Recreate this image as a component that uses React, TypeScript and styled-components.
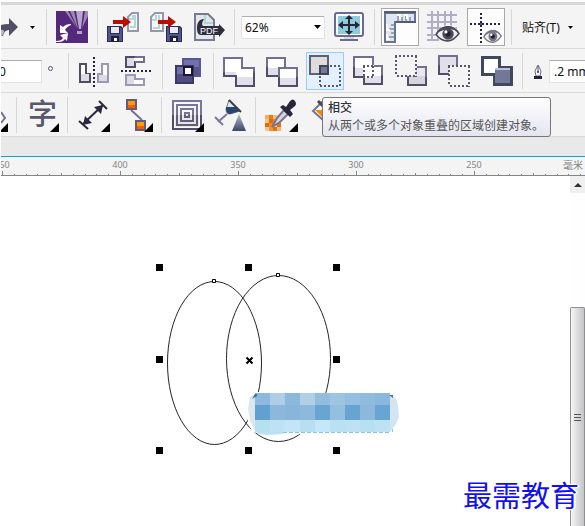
import React from "react";
import styled, { createGlobalStyle, css } from "styled-components";

const GlobalStyle = createGlobalStyle`
  * { box-sizing: border-box; }
  body {
    margin: 0;
    background: #fff;
    font-family: "Noto Sans", "Noto Sans CJK SC", sans-serif;
    font-size: 12px;
    color: #111;
  }
  button, input, select { font: inherit; color: inherit; }
  svg { display: block; flex: none; }
`;

const Page = styled.div`
  display: flex;
  flex-direction: column;
  min-height: 100vh;
  padding-left: 1px;
  overflow: hidden;
  position: relative;
`;

const TopEdge = styled.div`
  height: 5px;
  border-top: 2px solid #fff;
  background: #d7d7d7;
`;

const Toolbar = styled.div`
  display: flex;
  align-items: center;
  gap: 5px;
  height: 44px;
  padding: 3px 0 2px;
  background: #f4f4f4;
  border-bottom: 1px solid #d9d9d9;
  white-space: nowrap;
`;

const Separator = styled.span`
  flex: none;
  width: 1px;
  height: 36px;
  margin: 0 1px;
  background: #d6d6d6;
`;

const ToolButton = styled.button<{ $state?: "pressed" | "hover"; $width?: number }>`
  flex: none;
  width: ${(p) => p.$width ?? 38}px;
  height: 38px;
  padding: 0;
  border: 0;
  background: transparent;
  overflow: hidden;
  ${(p) => p.$state === "pressed" && css`
    background: #fdfdfd;
    box-shadow: inset 0 0 0 1px #a9a9a9;
  `}
  ${(p) => p.$state === "hover" && css`
    background: #e2f1fd;
    box-shadow: inset 0 0 0 1px #99ccf8;
  `}
`;

const SnapButton = styled.button`
  display: flex;
  flex: none;
  align-items: center;
  gap: 8px;
  height: 38px;
  padding: 0 4px;
  border: 0;
  background: transparent;
`;

const ZoomBox = styled.label`
  display: grid;
  flex: none;
  align-items: center;
  width: 84px;
  height: 23px;
  & > * { grid-area: 1 / 1; }
  & > svg { justify-self: end; margin-right: 4px; pointer-events: none; }
`;

const ZoomSelect = styled.select`
  appearance: none;
  width: 100%;
  height: 100%;
  padding: 0 3px;
  border: 1px solid #dfe2e8;
  border-top-color: #abadb3;
  border-radius: 2px;
  background: #fff;
`;

const Field = styled.input<{ $width: number; $cut?: boolean }>`
  flex: none;
  width: ${(p) => p.$width}px;
  height: 23px;
  padding: 0 4px;
  border: 1px solid #dfe2e8;
  border-top-color: #abadb3;
  background: #fff;
  ${(p) => p.$cut && css`
    padding: 0;
    border-left: 0;
    text-indent: -2px;
  `}
`;

const Unit = styled.span`
  flex: none;
  width: 15px;
  height: 38px;
`;

const TipAnchor = styled.div`
  position: relative;
  flex: none;
  height: 38px;
`;

const Tooltip = styled.div`
  position: absolute;
  z-index: 2;
  top: 45px;
  left: 16px;
  height: 40px;
  padding: 1px 5px;
  border: 1px solid #767676;
  border-radius: 3px;
  background: linear-gradient(#fff, #e4e5f0);
  line-height: 18px;
  width: 229px;
  color: #555;
`;

const TipTitle = styled.div`
  color: #333;
  font-weight: 500;
`;

const Band = styled.div`
  height: 20px;
  background: #e9e9e9;
  border-bottom: 1px solid #10a0ee;
`;

const Ruler = styled.div`
  position: relative;
  height: 19px;
  overflow: hidden;
  background: #f4f4f4;
  border-bottom: 1px solid #858585;
  color: #858585;
  font-size: 9px;
  line-height: 12px;
`;

const RulerCells = styled.div`
  display: flex;
  margin-left: -58px;
`;

const RulerCell = styled.div`
  flex: none;
  width: 118px;
  padding-top: 2px;
  text-align: center;
`;

const RulerUnit = styled.span`
  position: absolute;
  top: 2px;
  right: 2px;
  font-size: 10px;
  background: #f4f4f4;
`;

const Workspace = styled.main`
  display: flex;
  flex: 1;
`;

const Canvas = styled.div`
  flex: 1;
  min-width: 0;
  overflow: hidden;
`;

const Scrollbar = styled.div`
  display: flex;
  flex: none;
  flex-direction: column;
  justify-content: space-between;
  width: 15px;
  background: #fefefe;
`;

const ScrollArrow = styled.button`
  height: 17px;
  padding: 0;
  border: 0;
  background: #f0f0f0;
`;

const Thumb = styled.div`
  display: flex;
  align-items: center;
  justify-content: center;
  height: 219px;
  border: 1px solid #8e8e8e;
  border-bottom: 0;
  border-radius: 2px 2px 0 0;
  background: linear-gradient(90deg, #f6f6f6, #dedede 45%, #c4c5c9);
`;

const Watermark = styled.div`
  position: absolute;
  right: 6px;
  bottom: 14px;
  color: #1010f0;
  font-size: 29px;
  font-weight: 400;
  line-height: 36px;
  font-family: "Kaiti SC", KaiTi, "Noto Sans CJK SC", sans-serif;
  text-shadow: 0 0 2px #fff, 1px 1px 1px #fff, -1px -1px 1px #fff, 2px 0 1px #fff;
`;

const Icon = ({ w = 38, children }: { w?: number; children: React.ReactNode }) => (
  <svg width={w} height={38} viewBox={`0 0 ${w} 38`} aria-hidden="true">{children}</svg>
);

const Caret = () => (
  <svg width="7" height="4" viewBox="0 0 7 4" aria-hidden="true"><path d="M0 0h7L3.500 4z" fill="#000" /></svg>
);

const Tool = ({ label, state, children }: { label: string; state?: "pressed" | "hover"; children: React.ReactNode }) => (
  <ToolButton type="button" aria-label={label} $state={state}><Icon>{children}</Icon></ToolButton>
);

const Flyout = () => <path d="M36 27v9h-9z" fill="#000" />;

const DARK = "#514d66";
const MID = "#73708f";

const Floppy = ({ x }: { x: number }) => (
  <g transform={`translate(${x} 18)`}>
    <path d="M0 0h14l2 2v14H0z" fill="#2b2d56" />
    <path d="M1 1h2v7h10V1l2 2v12H1z" fill="#50558c" />
    <path d="M4 1h8v6H4z" fill="#e8eaf4" />
    <path d="M4 10h8v6H4z" fill="#20203e" />
    <path d="M7 12h3v3H7z" fill="#fff" />
  </g>
);

const RedArrow = ({ x }: { x: number }) => (
  <path d={`M${x} 12h10V8l8 6-8 6v-4H${x}z`} fill="#bb0d00" />
);

const Eye = ({ x, y, w, h, c }: { x: number; y: number; w: number; h: number; c: string }) => (
  <svg x={x} y={y} width={w} height={h} viewBox="0 0 24 17" preserveAspectRatio="none">
    <path d="M0 9C4 3 8 0 13 0s9 4 11 8c-3 5-7 9-12 9S3 14 0 9z" fill="#f4f4f4" />
    <path d="M1 9C4 4 8 2 13 2s8 3 10 6c-3 4-6 7-11 7S4 13 1 9z" fill="#eee" stroke={c} strokeWidth="1.500" />
    <path d="M1 8C5 2 9 1 13 1s8 3 10 6c-4-3-7-3-10-3S6 5 1 8z" fill={c} />
    <circle cx="12.500" cy="8.500" r="5.500" fill={c} />
    <circle cx="12.500" cy="8.500" r="2.500" fill="#222130" />
    <circle cx="10.500" cy="6.500" r="1.500" fill="#fff" />
  </svg>
);

const Shade = ({ id }: { id: string }) => (
  <defs>
    <linearGradient id={`${id}f`} x1="0" y1="0" x2="0" y2="1">
      <stop offset=".55" stopColor="#fff" /><stop offset=".55" stopColor="#e0e0ea" />
    </linearGradient>
    <linearGradient id={`${id}s`} x1="0" y1="0" x2="0" y2="1">
      <stop offset=".45" stopColor={MID} /><stop offset=".55" stopColor={DARK} />
    </linearGradient>
  </defs>
);

const dotted = { fill: "none", stroke: "#5a566d", strokeWidth: 2, strokeDasharray: "2 2" };

const MainBar = () => (
  <Toolbar role="toolbar" aria-label="标准">
    <ToolButton type="button" aria-label="重做" $width={20}>
      <Icon w={20}>
        <path d="M0 17q3-1 8-1v-6l9 9-9 9v-6q-5 0-6 6H0z" fill="#514e63" />
        <path d="M0 22q3-1 3 2l-2 4H0z" fill="#bdbcc5" />
      </Icon>
    </ToolButton>
    <ToolButton type="button" aria-label="重做列表" $width={14}>
      <Icon w={14}><path d="M4 18h5l-2.500 3z" fill="#000" /></Icon>
    </ToolButton>
    <Separator />
    <Tool label="欢迎屏幕">
      <path d="M3 3h32v32H3z" fill="#54287a" />
      <path d="M12 3h3l9 17zM34 3h1v5l-6 12zM17 3h4l4 18zM32 3h2l-5 18z" fill="#a087b7" />
      <path d="M23 3h7l-2 18h-2z" fill="#b9a5ca" />
      <path d="M24 23h5v3h-5z" fill="#b59fc7" />
      <path d="M18 16c-4 0-6 1-8 3l-3-2v8h8l-3-3c1-2 3-4 6-5z" fill="#fff" />
      <path d="M3 33c4 0 6-1 7-3l-3-3 8-2-1 8-2-2c-2 3-5 3-9 3z" fill="#fff" />
    </Tool>
    <Separator />
    <Tool label="导入">
      <path d="M28 5h6v18H24V9z" fill="#f5f7fa" stroke="#9599ac" strokeWidth="2" />
      <path d="M29 7v4h-4M31 7v12h-5" fill="none" stroke="#b2d8d5" strokeWidth="2" />
      <Floppy x={3} /><RedArrow x={9} />
    </Tool>
    <Tool label="导出">
      <path d="M8 5h8v18H4V9z" fill="#f5f7fa" stroke="#9599ac" strokeWidth="2" />
      <path d="M9 7v5H5M12 7v13H6" fill="none" stroke="#b2d8d5" strokeWidth="2" />
      <Floppy x={19} /><RedArrow x={11} />
    </Tool>
    <Tool label="发布为PDF">
      <path d="M5 6h13l6 6v20H5z" fill="#e4e6ed" stroke="#777a91" strokeWidth="2" />
      <path d="M15 7v8h8" fill="none" stroke="#aed6d4" strokeWidth="2" />
      <path d="M14 11c-5 0-7 4-7 9 0 4 1 7 4 7h18v2l6-7-6-6v2H13c-2-2 0-5 1-7z" fill="#2f2e41" />
      <text x="10" y="26" fill="#fff" fontSize="9" fontWeight="400" fontFamily="Liberation Sans, sans-serif">PDF</text>
    </Tool>
    <Separator />
    <ZoomBox>
      <ZoomSelect aria-label="缩放级别" defaultValue="62%">
        <option>62%</option><option>100%</option><option>200%</option>
      </ZoomSelect>
      <Caret />
    </ZoomBox>
    <Tool label="全屏预览">
      <rect x="5" y="5" width="28" height="23" rx="2" fill="#fff" stroke="#6b6a90" strokeWidth="2" />
      <path d="M8 8h22v18H8z" fill="#8fcbd9" />
      <path d="M10 17h18M19 10v14" stroke="#24263c" strokeWidth="2" />
      <path d="M8 17l5-4v8zM30 17l-5-4v8zM19 7l-4 4h8zM19 27l-4-4h8z" fill="#24263c" />
      <path d="M14 29h10v2H14z" fill="#d5d7e4" /><path d="M10 31h18v2H10z" fill="#6b6a90" />
    </Tool>
    <Separator />
    <Tool label="显示标尺" state="pressed">
      <path d="M4 5h30v9H14v20H4z" fill="#dfe6f0" stroke="#687590" strokeWidth="2" />
      <path d="M3 4h32" stroke="#535b76" strokeWidth="2" />
      <path d="M15 14h20" stroke="#535b76" strokeWidth="2" />
      <path d="M17 13V8M21 13v-4M25 13V8M29 13v-4M13 17h-3M13 21H8M13 25h-3M13 29H8" stroke="#536580" />
      <path d="M16 7h3v4M23 7h3v4M6 16v6h3M6 26v5h3" fill="none" stroke="#fff" strokeWidth="2" />
    </Tool>
    <Tool label="显示网格">
      <path d="M8 3v30M14 3v30M21 3v30M27 3v30M3 7h30M3 14h30M3 20h30M3 27h30M3 32h10" stroke="#b2aec9" strokeWidth="2" />
      <Eye x={11} y={17} w={25} h={18} c="#4b4a59" />
    </Tool>
    <Tool label="显示辅助线" state="pressed">
      <path d="M3 16h31M14 5v31" stroke="#24233d" strokeWidth="2" strokeDasharray="2 2" />
      <path d="M13 15h2v2h-2z" fill="#fff" stroke="#24233d" />
      <Eye x={16} y={21} w={19} h={15} c="#767583" />
    </Tool>
    <Separator />
    <SnapButton type="button"><span>贴齐(T)</span><svg width="5" height="3" viewBox="0 0 5 3"><path d="M0 0h5L2.500 3z" /></svg></SnapButton>
  </Toolbar>
);

const PropertyBar = () => (
  <Toolbar role="toolbar" aria-label="属性栏">
    <Field aria-label="旋转角度" defaultValue="0" $width={41} $cut />
    <Unit role="img" aria-label="度"><Icon w={15}><circle cx="3.500" cy="16.500" r="2" fill="none" stroke="#555266" /></Icon></Unit>
    <Separator />
    <Tool label="水平镜像">
      <path d="M5 12h6v10h4v8H5z" fill="#fff" stroke={DARK} strokeWidth="2" />
      <path d="M6 22h8v7H6z" fill="#dddce6" />
      <path d="M33 12h-6v10h-4v8h10z" fill="#fff" stroke="#9b98b2" strokeWidth="2" />
      <path d="M24 23h8v6h-8z" fill="#dddce6" />
      <path d="M19 5v31" stroke="#24233d" strokeWidth="2" strokeDasharray="2 2" />
    </Tool>
    <Tool label="垂直镜像">
      <path d="M8 5h18v5H17v5H8z" fill="#fff" stroke={DARK} strokeWidth="2" />
      <path d="M17 5h9v5h-9" fill="#fff" stroke={MID} strokeWidth="2" />
      <path d="M9 6h7v8H9z" fill="#dddce6" />
      <path d="M8 23h9v4h9v6H8z" fill="#fff" stroke="#9b98b2" strokeWidth="2" />
      <path d="M9 24h7v8H9z" fill="#dddce6" />
      <path d="M3 19h31" stroke="#24233d" strokeWidth="2" strokeDasharray="2 2" />
    </Tool>
    <Separator />
    <Tool label="合并">
      <path d="M14 7h17v17H14z" fill="#7371ad" stroke="#5b588f" strokeWidth="2" />
      <path d="M15 15h15v8H15z" fill="#57548a" />
      <path d="M7 14h17v17H7z" fill="#7371ad" stroke="#3c3a64" strokeWidth="2" />
      <path d="M8 22h15v8H8z" fill="#504d80" />
      <path d="M15 15h8v8h-8z" fill="#fff" stroke="#181735" strokeWidth="2" />
    </Tool>
    <Separator />
    <Tool label="焊接">
      <Shade id="a" />
      <path d="M4 6h18v10h12v18H16V24H4z" fill="#fff" />
      <path d="M4 20h12v4H4zM16 25h18v9H16z" fill="#e0e0ea" />
      <path d="M4 6h18v10h12v18H16V24H4z" fill="none" stroke="url(#as)" strokeWidth="2" />
    </Tool>
    <Tool label="修剪">
      <Shade id="b" />
      <path d="M4 6h18v18H4z" fill="url(#bf)" stroke="url(#bs)" strokeWidth="2" />
      <path d="M16 16h18v18H16z" fill="url(#bf)" stroke="url(#bs)" strokeWidth="2" />
    </Tool>
    <TipAnchor>
      <Tool label="相交" state="hover">
        <path d="M4 4h18v18H4z" fill="#dcdcdc" stroke="#625f75" strokeWidth="2" />
        <path d="M14 14h8v8h-8z" fill="#7276a0" stroke="#454156" strokeWidth="2" />
        <path d="M24 14h11M34 16v19M32 34H14M14 24v9" {...dotted} />
      </Tool>
      <Tooltip role="tooltip">
        <TipTitle>相交</TipTitle>
        <div>从两个或多个对象重叠的区域创建对象。</div>
      </Tooltip>
    </TipAnchor>
    <Tool label="简化">
      <Shade id="c" />
      <path d="M5 5h19v20H5z" fill="url(#cf)" stroke="url(#cs)" strokeWidth="2" />
      <path d="M15 14h18v18H15z" fill="url(#cf)" stroke="url(#cs)" strokeWidth="2" />
      <path d="M15 14h9v11h-9z" fill="#fff" stroke="#fff" strokeWidth="2" />
      <path d="M14 14h11M24 14v12M24 25H14M15 14v12" {...dotted} />
    </Tool>
    <Tool label="移除后面对象">
      <path d="M16 15h18v18H16z" fill="#d5d5dd" />
      <path d="M25 15h9v9h-9z" fill="#e8e8ee" />
      <path d="M25 15h9v18H16v-9" fill="none" stroke={MID} strokeWidth="2" />
      <path d="M34 25v8H16v-8" fill="none" stroke={DARK} strokeWidth="2" />
      <path d="M4 4h20v20H4z" fill="#f4f4f4" />
      <path d="M3 4h22M24 4v21M23 24H3M4 4v20" {...dotted} />
    </Tool>
    <Tool label="移除前面对象">
      <Shade id="d" />
      <path d="M4 4h18v18H4z" fill="#e0e0e6" stroke="url(#ds)" strokeWidth="2" />
      <path d="M14 14h20v20H14z" fill="#f4f4f4" />
      <path d="M13 14h22M34 14v21M33 34H13M14 14v20" {...dotted} />
    </Tool>
    <Tool label="创建边界">
      <path d="M4.500 5.500h17v10h12v17h-17v-10h-12z" fill="#fff" stroke="#41475c" strokeWidth="3" />
      <path d="M17 17h15v14H17z" fill="#727896" /><path d="M17 16h15v2H17z" fill="#b5c3df" />
    </Tool>
    <Separator />
    <Unit role="img" aria-label="轮廓宽度">
      <Icon w={15}>
        <path d="M9 13l-3 6 1 5h4l1-5z" fill="#fff" stroke="#69677d" />
        <path d="M9 14v6" stroke="#555368" /><circle cx="9" cy="20" r="1" fill="#333146" />
        <path d="M5 24h8v3H5z" fill="#25243b" />
      </Icon>
    </Unit>
    <Field aria-label="轮廓宽度" defaultValue=".2 mm" $width={80} />
  </Toolbar>
);

const checks = [
  ["#f5ad62", "#e77a11", "#f6bd83", "#f8d0a8"],
  ["#f6c18b", "#dc6e08", "#ef8b23", "#f6be80"],
  ["#dc6e08", "#ef8b23", "#f6c28e", "#dc7314"],
  ["#f5c596", "#ef9338", "#de7310", "#f4b473"],
];

const ToolboxBar = () => (
  <Toolbar role="toolbar" aria-label="工具箱">
    <ToolButton type="button" aria-label="多边形工具" $width={9}>
      <Icon w={9}><path d="M0 16l4 6-4 5" fill="none" stroke={MID} strokeWidth="2" /><path d="M7 27v9H0v-2z" /></Icon>
    </ToolButton>
    <Separator />
    <Tool label="文本工具">
      <text x="5" y="29" fontSize="29" fontWeight="500" fill="#5a566d">字</text><Flyout />
    </Tool>
    <Separator />
    <Tool label="平行度量工具">
      <path d="M9 28L29 9M5 25l9 8M25 5l8 8" stroke="#2b2940" strokeWidth="2" />
      <path d="M9 29l2-9 7 7zM29 9l-9 2 7 7z" fill="#2b2940" /><Flyout />
    </Tool>
    <Tool label="直线连接器工具">
      <path d="M14 14l11 10" stroke={MID} strokeWidth="2" />
      <path d="M10 4h9v9h-9zM19 25h9v9h-9z" fill="#ff9b00" stroke="#615c79" strokeWidth="2" />
      <path d="M11 9h7v3h-7zM20 30h7v3h-7z" fill="#ff5900" /><Flyout />
    </Tool>
    <Separator />
    <Tool label="轮廓图工具">
      <defs>
        <linearGradient id="contour" gradientUnits="userSpaceOnUse" x1="0" y1="4" x2="0" y2="34">
          <stop offset=".5" stopColor="#77759a" /><stop offset=".5" stopColor={DARK} />
        </linearGradient>
      </defs>
      <path d="M5 5h28v28H5zM9 9h20v20H9zM13 13h12v12H13zM17 17h4v4h-4z" fill="#f8f8fb" stroke="url(#contour)" strokeWidth="2" fillRule="evenodd" />
      <path d="M7 19h24v12H7z" fill="#aaa7b6" opacity=".2" /><Flyout />
    </Tool>
    <Tool label="透明度工具">
      <defs><linearGradient id="beam" x1="0" y1="0" x2="0" y2="1"><stop stopColor="#b7bdcd" /><stop offset="1" stopColor="#3b4568" /></linearGradient></defs>
      <path d="M28 18l7 17H21z" fill="url(#beam)" />
      <path d="M18 4L15 13q0 5 4 5l10-3z" fill="#e3e8ed" stroke="#747487" strokeWidth="1" />
      <path d="M15 11h10l4 4-10 3q-4 0-4-5z" fill="#26466f" />
      <path d="M18 4l12 12" stroke="#3b3c51" strokeWidth="2" />
      <path d="M16 18l-9 8M4 21l8 8" stroke="#7c7b98" strokeWidth="2" />
    </Tool>
    <Separator />
    <Tool label="颜色滴管工具">
      {checks.map((row, y) => row.map((c, x) => <rect key={`${x}-${y}`} x={3 + x * 4} y={19 + y * 4} width="4" height="4" fill={c} />))}
      <path d="M22 14l4 4-8 8-8 5 5-9z" fill="#d5d5e0" stroke="#77748f" strokeWidth="2" />
      <path d="M18 11l3-2 3 2 4-6q3-3 5 0t0 5l-5 4 3 4-3 3z" fill="#28263a" /><Flyout />
    </Tool>
    <Tool label="交互式填充工具">
      <path d="M18 5L8 15l10 9 9-9z" fill="#fff" stroke="#77748f" strokeWidth="2" />
      <path d="M10 14h17l-9 8z" fill="#f08a0a" />
      <path d="M13 5l5 5" stroke="#464358" strokeWidth="3" />
    </Tool>
  </Toolbar>
);

const ticks = [-5, -4, -3, -2, -1, 0, 1, 2, 3, 4];

const RulerBar = () => (
  <Ruler>
    <RulerCells>
      {["450", "400", "350", "300", "250", ""].map((n, i) => (
        <RulerCell key={i}>
          {n || "\u00a0"}
          <svg width="118" height="5" viewBox="0 0 118 5" shapeRendering="crispEdges" aria-hidden="true">
            {ticks.map((t) => {
              const h = t === 0 ? 5 : t === -5 ? 2 : 1;
              return <rect key={t} x={Math.round(59 + t * 11.800)} y={4 - h} width="1" height={h} fill="#858585" />;
            })}
          </svg>
        </RulerCell>
      ))}
    </RulerCells>
    <RulerUnit>毫米</RulerUnit>
  </Ruler>
);

const mosaic = [
  ["#8db9de", "#aecde6", "#8cb8dc", "#b1cfe6", "#94bddd", "#9dc4e1", "#94bfe0", "#90bbdd", "#8ab8dc"],
  ["#62a0d0", "#8cb8dc", "#88b5da", "#8db9dc", "#69a5d3", "#94bfdf", "#68a4d1", "#8bb8db", "#68a5d3"],
  ["#b6dff0", "#bce2f3", "#c3e5f5", "#b8dfef", "#c5e8f8", "#bae1f1", "#bee2f3", "#b7e0f1", "#bce2f4"],
];
const rowTops = [393, 405, 420, 432];

const Drawing = () => (
  <svg width="568" height="350" viewBox="1 176 568 350" role="img" aria-label="两个相交的椭圆">
    <g fill="none" stroke="#2a2222">
      <ellipse cx="214.500" cy="363" rx="47" ry="81.500" />
      <ellipse cx="278.500" cy="358.500" rx="52" ry="83" />
    </g>
    <path d="M212.500 279.500h3v3h-3zM276.500 273.500h3v3h-3z" fill="#fff" stroke="#000" />
    {[264, 356, 447].map((y) => [156, 245, 333].map((x) =>
      x === 245 && y === 356 ? null : <rect key={`${x}-${y}`} x={x} y={y} width="7" height="7" />
    ))}
    <path d="M246.500 357.500l6 6M252.500 357.500l-6 6" stroke="#000" strokeWidth="2" />
    <path d="M250 395l6-3 80 1 56 1 6 8 2 12-4 12-4 7-88 1-36 1-16-3-4-12-1-14z" fill="#fff" />
    <path d="M255 394l-5 3-2 12 2 12 5 10z" fill="#dbe6ee" />
    <path d="M390 396l6 2 2 8 1 11-3 7-6 8z" fill="#d3e5f2" />
    <path d="M255 430h35l-8 4-14 1-10-1z" fill="#b9e1f3" />
    {mosaic.map((row, r) => row.map((c, i) => (
      <rect key={`${r}-${i}`} x={255 + i * 15} y={rowTops[r]} width="15" height={rowTops[r + 1] - rowTops[r]} fill={c} />
    )))}
    <path d="M389 395h4v3zM255 394h2v2l-5 3z" fill="#1e76c0" />
    <path d="M283 432.500h107M392.500 429v3" stroke="#7cc9ec" strokeDasharray="4 2" />
  </svg>
);

export default function App() {
  return (
    <Page>
      <GlobalStyle />
      <TopEdge />
      <MainBar />
      <PropertyBar />
      <ToolboxBar />
      <Band />
      <RulerBar />
      <Workspace>
        <Canvas><Drawing /></Canvas>
        <Scrollbar>
          <ScrollArrow type="button" aria-label="向上滚动">
            <svg width="15" height="17" viewBox="0 0 15 17"><path d="M4 11l4-4 4 4z" fill="#333" /></svg>
          </ScrollArrow>
          <Thumb>
            <svg width="7" height="9" viewBox="0 0 7 9"><path d="M0 1.500h7M0 4.500h7M0 7.500h7" stroke="#555" /></svg>
          </Thumb>
        </Scrollbar>
      </Workspace>
      <Watermark>最需教育</Watermark>
    </Page>
  );
}
